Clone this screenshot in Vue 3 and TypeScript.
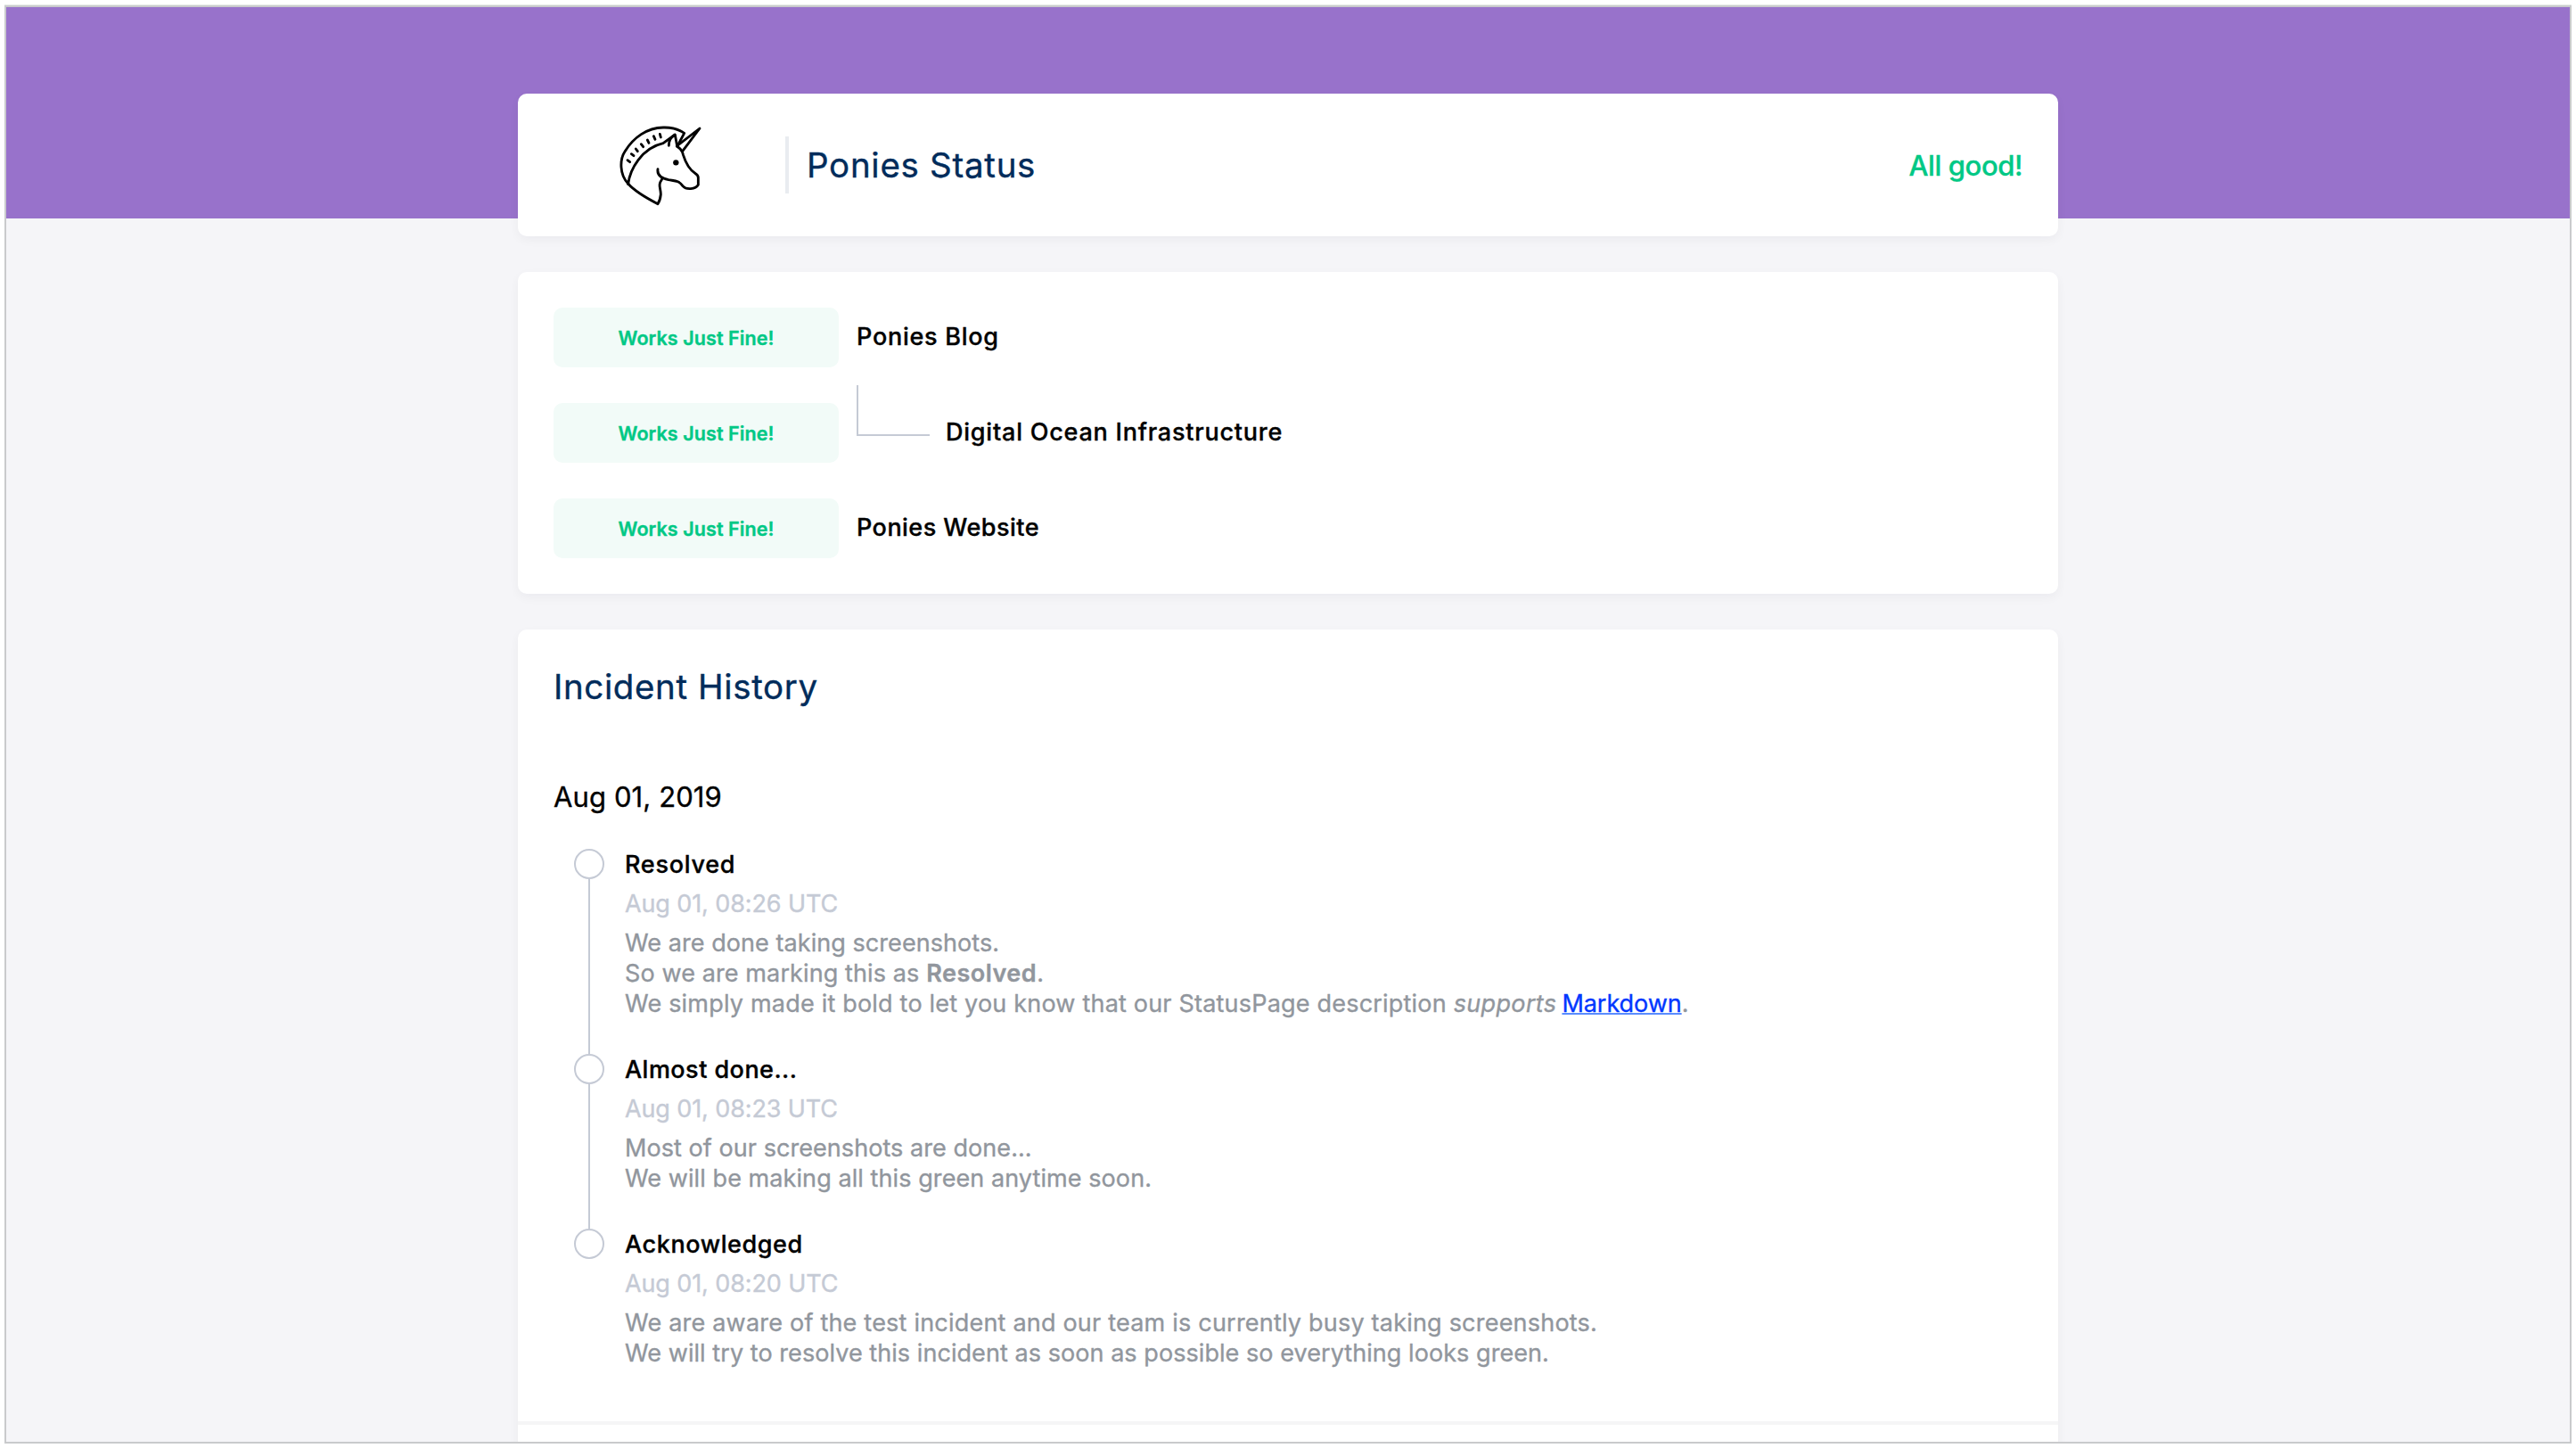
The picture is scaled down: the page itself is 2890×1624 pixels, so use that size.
<script setup lang="ts">
interface Component {
  name: string
  status: string
  nested?: boolean
  spacing: number
}

interface Segment {
  text: string
  kind?: 'strong' | 'em' | 'link'
  spacing: number
}

interface Update {
  title: string
  titleSpacing: number
  date: string
  lines: Segment[][]
}

const components: Component[] = [
  { name: 'Ponies Blog', status: 'Works Just Fine!', spacing: 0.74 },
  { name: 'Digital Ocean Infrastructure', status: 'Works Just Fine!', nested: true, spacing: 0.78 },
  { name: 'Ponies Website', status: 'Works Just Fine!', spacing: 0.46 },
]

const updates: Update[] = [
  {
    title: 'Resolved',
    titleSpacing: 0.73,
    date: 'Aug 01, 08:26 UTC',
    lines: [
      [{ text: 'We are done taking screenshots.', spacing: 0.06 }],
      [
        { text: 'So we are marking this as ', spacing: 0.11 },
        { text: 'Resolved', kind: 'strong', spacing: 0.5 },
        { text: '.', spacing: -1 },
      ],
      [
        { text: 'We simply made it bold to let you know that our StatusPage description ', spacing: 0.2 },
        { text: 'supports', kind: 'em', spacing: 0.35 },
        { text: ' ', spacing: -1.6 },
        { text: 'Markdown', kind: 'link', spacing: -0.05 },
        { text: '.', spacing: 0 },
      ],
    ],
  },
  {
    title: 'Almost done...',
    titleSpacing: 0.47,
    date: 'Aug 01, 08:23 UTC',
    lines: [
      [{ text: 'Most of our screenshots are done...', spacing: 0.06 }],
      [{ text: 'We will be making all this green anytime soon.', spacing: 0.08 }],
    ],
  },
  {
    title: 'Acknowledged',
    titleSpacing: 0.59,
    date: 'Aug 01, 08:20 UTC',
    lines: [
      [{ text: 'We are aware of the test incident and our team is currently busy taking screenshots.', spacing: 0.21 }],
      [{ text: 'We will try to resolve this incident as soon as possible so everything looks green.', spacing: 0.06 }],
    ],
  },
]

const tags = { strong: 'strong', em: 'em', link: 'a' } as const
const tagOf = (s: Segment): string => (s.kind ? tags[s.kind] : 'span')
const tracking = (px: number) => ({ letterSpacing: `${px}px` })
</script>

<template>
  <div class="frame">
    <div class="band"></div>
    <main class="container">
      <header class="card header">
        <svg class="logo" viewBox="0 0 450 390" width="150" height="130" aria-label="Ponies">
          <g fill="none" stroke="#000" stroke-width="8.5" stroke-linecap="round" stroke-linejoin="round">
            <path d="M104 258C74 226 76 176 93 150C122 102 168 70 222 69C250 68 276 76 293 88L270 131" />
            <path d="M104 260C110 210 150 138 222 122L262 93L269 132" />
            <path d="M241 130C241 116 247 102 261 94" />
            <path d="M271 129L345 72L287 149" />
            <path d="M268 132Q286 143 289 160C299 192 311 212 331 224Q341 230 340 240V262C331 277 300 280 288 266C275 247 262 249 240 245C216 240 201 229 204 209" />
            <path d="M218 243C203 264 214 272 214 294Q212 314 204 326C165 306 127 284 104 258" />
            <path d="M102 179L110 185M115 158L123 164M130 141L136 149M148 125L155 134M169 111L174 121M190 98L195 109M211 91L214 102" />
          </g>
          <circle cx="265" cy="187" r="9.5" />
        </svg>
        <span class="divider"></span>
        <h1>Ponies Status</h1>
        <span class="overall">All good!</span>
      </header>

      <section class="card components">
        <div v-for="c in components" :key="c.name" class="component">
          <span class="badge">{{ c.status }}</span>
          <span v-if="c.nested" class="branch"></span>
          <span class="name" :style="tracking(c.spacing)">{{ c.name }}</span>
        </div>
      </section>

      <section class="card history">
        <div class="incident">
          <h2>Incident History</h2>
          <h3>Aug 01, 2019</h3>
          <ol class="timeline">
            <li v-for="u in updates" :key="u.title">
              <div class="rail"><i class="dot"></i><i class="line"></i></div>
              <div class="update">
                <h4 :style="tracking(u.titleSpacing)">{{ u.title }}</h4>
                <time>{{ u.date }}</time>
                <p>
                  <span v-for="(line, i) in u.lines" :key="i" class="row"><component :is="tagOf(s)" v-for="(s, j) in line" :key="j" :style="tracking(s.spacing)">{{ s.text }}</component></span>
                </p>
              </div>
            </li>
          </ol>
        </div>
      </section>
    </main>
  </div>
</template>

<style>
body {
  background: #fff;
  overflow: hidden;
}
</style>

<style scoped>
.frame {
  box-sizing: border-box;
  width: 2880px;
  height: 1613px;
  margin: 6px 0 0 5px;
  border: 2px solid #c9cacc;
  box-shadow: 0 -1px #e6ebe6, 0 1px #dedede;
  background: #f5f5f8;
  overflow: hidden;
  font-family: Inter, "Liberation Sans", sans-serif;
  color: #000;
  -webkit-text-stroke: 0.35px currentColor;
}

.band {
  height: 237px;
  background: #9872cb;
}

.container {
  position: relative;
  display: flex;
  flex-direction: column;
  gap: 40px;
  width: 1728px;
  margin: -140px auto 0;
}

.card {
  box-sizing: border-box;
  padding: 40px;
  border-radius: 10px;
  background: #fff;
  box-shadow: 0 4px 12px rgba(0, 20, 40, 0.045);
}

.header {
  display: flex;
  align-items: center;
  height: 160px;
}

.logo {
  flex: none;
  margin: 0 61px 0 49px;
}

.divider {
  width: 4px;
  height: 64px;
  margin-right: 20px;
  background: #e9ecf0;
}

h1,
h2,
h3,
h4,
p,
ol {
  margin: 0;
  padding: 0;
}

h1,
h2 {
  font-size: 38.5px;
  font-weight: 400;
  line-height: 49px;
  color: #002c5b;
}

h1 {
  letter-spacing: 0.71px;
}

h2 {
  letter-spacing: 0.61px;
}

.overall {
  margin-left: auto;
  padding-top: 2px;
  font-size: 31px;
  font-weight: 500;
  letter-spacing: -0.4px;
  line-height: 38px;
  color: #00c885;
}

.components {
  display: flex;
  flex-direction: column;
  gap: 40px;
  height: 361px;
}

.component {
  display: flex;
  height: 67px;
}

.badge {
  width: 320px;
  margin-right: 20px;
  border-radius: 10px;
  background: #f2fbf8;
  font-size: 21.5px;
  font-weight: 600;
  line-height: 69px;
  letter-spacing: 0.08px;
  text-align: center;
  color: #00c885;
}

.branch {
  box-sizing: border-box;
  width: 82px;
  height: 57px;
  margin: -20px 18px 0 0;
  border: solid #c5cad5;
  border-width: 0 0 2px 2px;
}

.name {
  font-size: 27px;
  font-weight: 500;
  line-height: 65px;
}

.history {
  height: 1000px;
  padding: 0;
}

.incident {
  box-sizing: border-box;
  height: 892px;
  padding: 40px;
  border-bottom: 4px solid #f5f5f6;
}

h3 {
  margin: 79px 0 40px;
  font-size: 31px;
  font-weight: 400;
  line-height: 39px;
  letter-spacing: 0.11px;
}

.timeline {
  margin-top: -1px;
  list-style: none;
}

.timeline li {
  display: flex;
}

.rail {
  display: flex;
  flex-direction: column;
  align-items: center;
  width: 34px;
  margin: 0 23px;
}

.dot {
  box-sizing: border-box;
  flex: none;
  width: 34px;
  height: 34px;
  border: 2px solid #c5cad5;
  border-radius: 50%;
}

.line {
  flex: 1;
  width: 2px;
  background: #c5cad5;
}

.timeline li:last-child .line {
  display: none;
}

.update {
  display: flex;
  flex-direction: column;
  gap: 10px;
  padding: 1px 0 39px;
  font-size: 27px;
  line-height: 34px;
  white-space: pre;
}

h4 {
  font-size: 27px;
  font-weight: 500;
}

time {
  letter-spacing: -0.11px;
  color: #c5cad5;
}

p {
  display: flex;
  flex-direction: column;
  color: #91969d;
}

.row {
  display: block;
}

strong {
  font-weight: 600;
}

a {
  color: #0037ff;
  text-decoration: underline;
  text-decoration-color: #5a8cff;
  text-decoration-thickness: 2px;
  text-decoration-skip-ink: none;
}
</style>
